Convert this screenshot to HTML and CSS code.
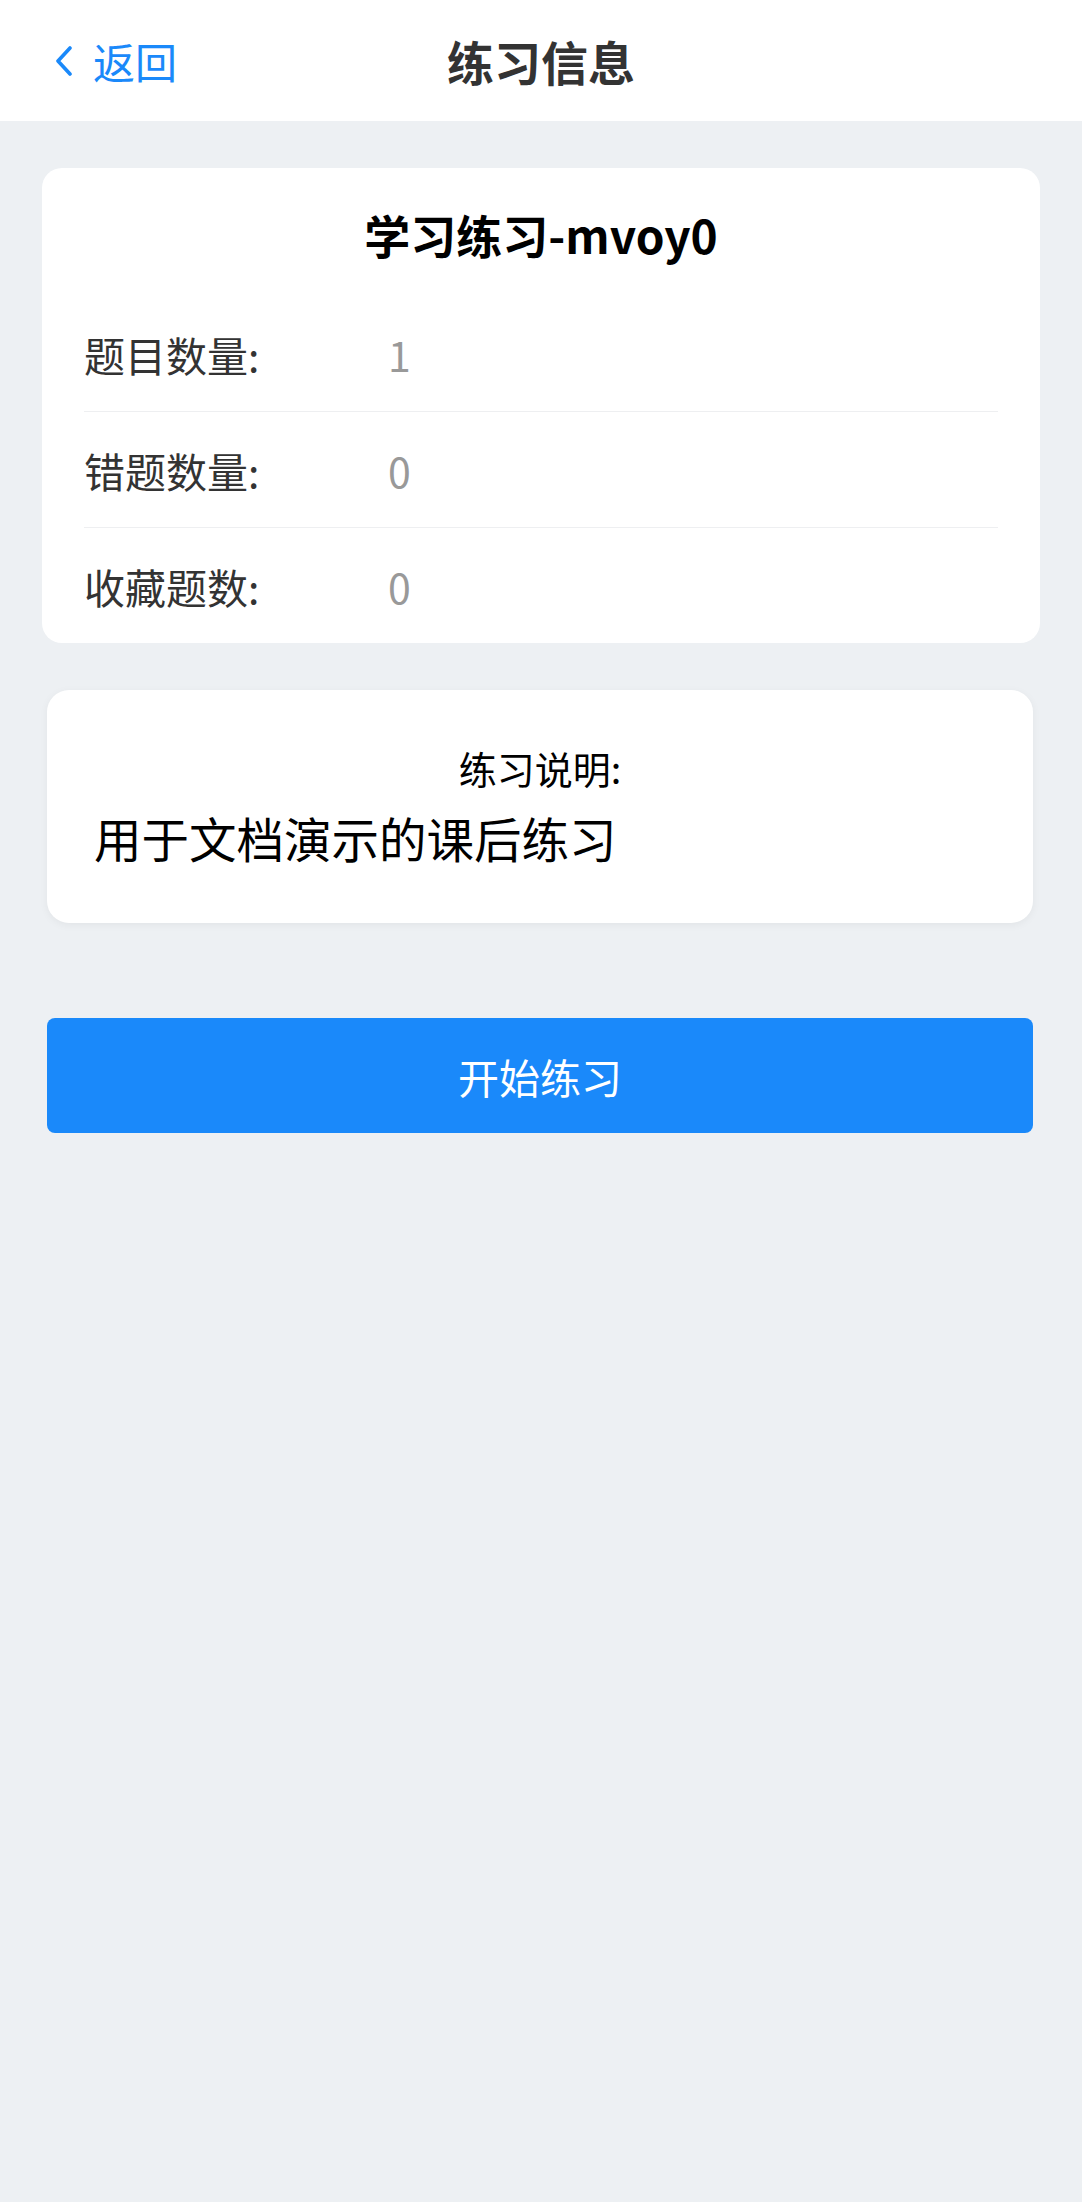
FILE: index.html
```html
<!DOCTYPE html>
<html lang="zh-CN">
<head>
<meta charset="utf-8">
<title>练习信息</title>
<link rel="stylesheet" href="styles.css">
</head>
<body>
<header class="nav">
  <div class="nav-left">
    <svg class="chev" width="18" height="30" viewBox="0 0 18 30"><polyline points="15,2 3,15 15,28" fill="none" stroke="#1a89fa" stroke-width="3.6" stroke-linecap="round" stroke-linejoin="round"/></svg>
    <span class="back">返回</span>
  </div>
  <div class="nav-title">练习信息</div>
  <div class="nav-right"></div>
</header>
<main class="page">
  <section class="card info">
    <h1 class="info-title">学习练习-mvoy0</h1>
    <div class="row"><span class="label">题目数量:</span><span class="value">1</span></div>
    <div class="row"><span class="label">错题数量:</span><span class="value">0</span></div>
    <div class="row last"><span class="label">收藏题数:</span><span class="value">0</span></div>
  </section>
  <section class="card desc">
    <div class="desc-title">练习说明:</div>
    <div class="desc-text">用于文档演示的课后练习</div>
  </section>
  <button class="start">开始练习</button>
</main>
</body>
</html>
```
FILE: styles.css
```css
html, body {
  margin: 0;
  padding: 0;
}
body {
  background: #edf0f3;
  font-family: "Noto Sans CJK SC", "Noto Sans", sans-serif;
  min-height: 2202px;
}
.nav {
  height: 121px;
  background: #fff;
  display: grid;
  grid-template-columns: 1fr auto 1fr;
  align-items: center;
}
.nav-left {
  display: flex;
  align-items: center;
  padding-left: 55px;
}
.chev {
  display: block;
}
.back {
  margin-left: 20px;
  font-size: 42px;
  line-height: 60px;
  color: #1a89fa;
}
.nav-title {
  font-size: 47px;
  font-weight: 700;
  color: #333;
  line-height: 60px;
}
.page {
  padding: 47px 42px 0;
  display: flex;
  flex-direction: column;
}
.card {
  background: #fff;
}
.info {
  border-radius: 20px;
  padding: 0 42px;
}
.info-title {
  margin: 0;
  padding-top: 4px;
  height: 124px;
  line-height: 124px;
  text-align: center;
  font-size: 46px;
  font-weight: 700;
  color: #000;
}
.row {
  height: 115px;
  display: flex;
  align-items: center;
  border-bottom: 1.5px solid #eeeff1;
  font-size: 41px;
}
.row.last {
  border-bottom: none;
}
.label {
  width: 304px;
  color: #333;
}
.value {
  color: #999;
}
.desc {
  margin: 47px 7px 0 5px;
  border-radius: 22px;
  padding: 53px 47px 40px;
  box-shadow: 0 2px 8px rgba(0, 0, 0, 0.05);
}
.desc-title {
  text-align: center;
  font-size: 38px;
  line-height: 50px;
  color: #000;
}
.desc-text {
  font-size: 47.5px;
  line-height: 90px;
  color: #000;
}
.start {
  margin: 95px 7px 0 5px;
  height: 115px;
  border: none;
  border-radius: 8px;
  background: #1a89fa;
  color: #fff;
  font-family: inherit;
  font-size: 41px;
  padding: 0;
}
```
